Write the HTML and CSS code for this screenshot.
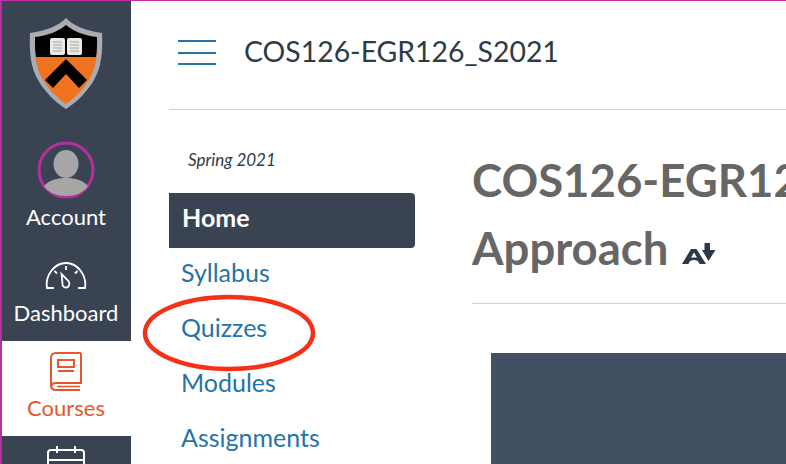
FILE: index.html
```html
<!DOCTYPE html>
<html lang="en">
<head>
<meta charset="utf-8">
<title>COS126-EGR126_S2021</title>
<link rel="stylesheet" href="styles.css">
</head>
<body>
<div class="app">
  <nav class="rail">
    <div class="logo">
      <svg width="74" height="92" viewBox="0 0 74 92">
        <path d="M37 0C31 7 17 13 1 15C0 35 2 50 9 62C16 74 26 84 37 91C48 84 58 74 65 62C72 50 74 35 73 15C57 13 43 7 37 0Z" fill="#a9adb3"/>
        <path d="M37 7C30 13 18 18 6 19C5 36 7 50 13 60C19 71 28 80 37 86C46 80 55 71 61 60C67 50 69 36 68 19C56 18 44 13 37 7Z" fill="#f07320"/>
        <path d="M37 7C30 13 18 18 6 19C6 27 6 33 7 39H67C68 33 68 27 68 19C56 18 44 13 37 7Z" fill="#000"/>
        <path d="M37 41L58 62L50 70L37 56L24 70L16 62Z" fill="#000"/>
        <rect x="21" y="20" width="15" height="17" rx="2" fill="#e9e9e6"/>
        <rect x="38" y="20" width="15" height="17" rx="2" fill="#e9e9e6"/>
        <path d="M24 24H33M24 27H33M24 30H33M24 33H33M41 24H50M41 27H50M41 30H50M41 33H50" stroke="#a5a5a5"/>
      </svg>
    </div>
    <a class="rail-item account">
      <svg class="avatar" width="58" height="58" viewBox="0 0 58 58">
        <circle cx="29" cy="29" r="27" fill="#394352" stroke="#b5309e" stroke-width="3"/>
        <ellipse cx="29" cy="23" rx="12.500" ry="14" fill="#a6a6a6"/>
        <path d="M7 45C13 38 22 37 29 37C36 37 45 38 51 45C46 52 38 55 29 55C20 55 12 52 7 45Z" fill="#a6a6a6"/>
      </svg>
      <span>Account</span>
    </a>
    <a class="rail-item dashboard">
      <svg width="42" height="30" viewBox="0 0 42 30" fill="none" stroke="#fff" stroke-width="1.800">
        <path d="M9 27H2C0 15 9 2 21 2C33 2 42 15 40 27H33"/>
        <path d="M21 26.500C18.500 26.500 17 24.500 17.500 22.500L16.500 13L23.500 20C25.500 23 24 26.500 21 26.500Z"/>
        <path d="M21 5V9M9.500 10L12 12.500M32.500 10L30 12.500"/>
      </svg>
      <span>Dashboard</span>
    </a>
    <a class="rail-item courses">
      <svg width="32" height="39" viewBox="0 0 32 39" fill="none" stroke="#e5582c" stroke-width="2">
        <path d="M31 1H6C3 1 1 3 1 6V33C1 36 3 38 6 38H30"/>
        <path d="M31 1V31H6C3 31 1 32 1 35"/>
        <path d="M7 34.500H30" stroke-width="1.500"/>
        <rect x="8" y="8" width="16" height="7"/>
        <path d="M8 19H24"/>
      </svg>
      <span>Courses</span>
    </a>
    <a class="rail-item calendar">
      <svg width="38" height="30" viewBox="0 0 38 30" fill="none" stroke="#fff" stroke-width="2">
        <rect x="1" y="4" width="36" height="30" rx="3"/>
        <path d="M1 14H37M10 0V7M28 0V7"/>
      </svg>
    </a>
  </nav>
  <div class="page">
    <header class="topbar">
      <button class="burger" aria-label="Menu"><i></i><i></i><i></i></button>
      <span class="crumb">COS126-EGR126_S2021</span>
    </header>
    <div class="body">
      <aside class="course-nav">
        <p class="term">Spring 2021</p>
        <ul class="links">
          <li class="active">Home</li>
          <li>Syllabus</li>
          <li>Quizzes</li>
          <li>Modules</li>
          <li>Assignments</li>
        </ul>
      </aside>
      <main class="content">
        <div class="title-block">
          <h1>COS126-EGR126: Computer Science:<br>Approach <svg class="a11y" width="34" height="22" viewBox="0 0 34 22"><path d="M0 21L9 6H14.500L24 21H17.500C16.800 18.500 15 17 12 17C9 17 7 18.500 6.500 21ZM12 9.500L9 14.500H15Z" fill="#2b3a4a" fill-rule="evenodd"/><path d="M22.500 0H28V7H33.500L26.500 18L20 7H22.500Z" fill="#2b3a4a"/></svg></h1>
        </div>
        <div class="banner"></div>
      </main>
    </div>
  </div>
  <svg class="circle" width="176" height="82" viewBox="0 0 176 82"><ellipse cx="88" cy="41" rx="84" ry="36" fill="none" stroke="#f62f17" stroke-width="4.500"/></svg>
</div>
</body>
</html>
```
FILE: styles.css
```css
* { box-sizing: border-box; }
html, body { margin: 0; height: 100%; overflow: hidden; background: #fff; }
body { font-family: Lato, "Open Sans", sans-serif; }
.app { position: relative; display: flex; width: 786px; height: 464px; overflow: hidden; border-top: 1px solid #c22fa5; }
.rail { flex: 0 0 131px; height: 463px; background: #394352; border-left: 2px solid #b5309e; display: flex; flex-direction: column; color: #fff; overflow: hidden; }
.logo { flex: none; height: 138px; padding-top: 17px; display: flex; justify-content: center; align-items: flex-start; padding-right: 1px; }
.rail-item { flex: none; display: flex; flex-direction: column; align-items: center; font-size: 22px; line-height: 26px; padding-right: 1px; }
.account { height: 93px; padding-top: 2px; gap: 5px; }
.dashboard { height: 109px; padding-top: 29px; gap: 9px; }
.courses { height: 95px; background: #fff; color: #e5582c; padding-top: 11px; gap: 4px; }
.calendar { padding-top: 10px; }
.page { flex: 1; min-width: 0; padding-left: 38px; display: flex; flex-direction: column; }
.topbar { height: 109px; flex: none; border-bottom: 1px solid #d0d3d5; display: flex; align-items: center; padding: 0 0 5px 9px; white-space: nowrap; }
.burger { width: 38px; height: 25px; margin: 0 28px 0 0; padding: 0; border: 0; background: none; display: flex; flex-direction: column; justify-content: space-between; }
.burger i { display: block; height: 2px; background: #2573a7; }
.crumb { font-size: 28.400px; color: #2d3b45; line-height: 34px; margin-top: -4px; }
.body { display: flex; flex: 1; min-height: 0; }
.course-nav { flex: 0 0 246px; }
.term { margin: 0; padding: 39px 0 0 19px; height: 83px; font-size: 17px; line-height: 22px; font-style: italic; color: #2d3b45; }
.links { list-style: none; margin: 0; padding: 0; }
.links li { height: 55px; line-height: 49px; padding-left: 12px; font-size: 25px; color: #2573a7; }
.links .active { background: #394352; color: #fff; font-weight: 700; padding-left: 13px; line-height: 49px; border-radius: 0 4px 4px 0; }
.content { flex: 1; min-width: 0; margin-left: 57px; }
.title-block { height: 194px; padding-top: 36px; border-bottom: 1px solid #d0d3d5; }
h1 { margin: 0; font-size: 45.500px; line-height: 68px; font-weight: 700; color: #666; white-space: nowrap; }
.a11y { vertical-align: baseline; margin-left: 3px; }
.banner { margin: 49px 0 0 19px; height: 200px; background: #435064; }
.circle { position: absolute; left: 141px; top: 291px; }
```
